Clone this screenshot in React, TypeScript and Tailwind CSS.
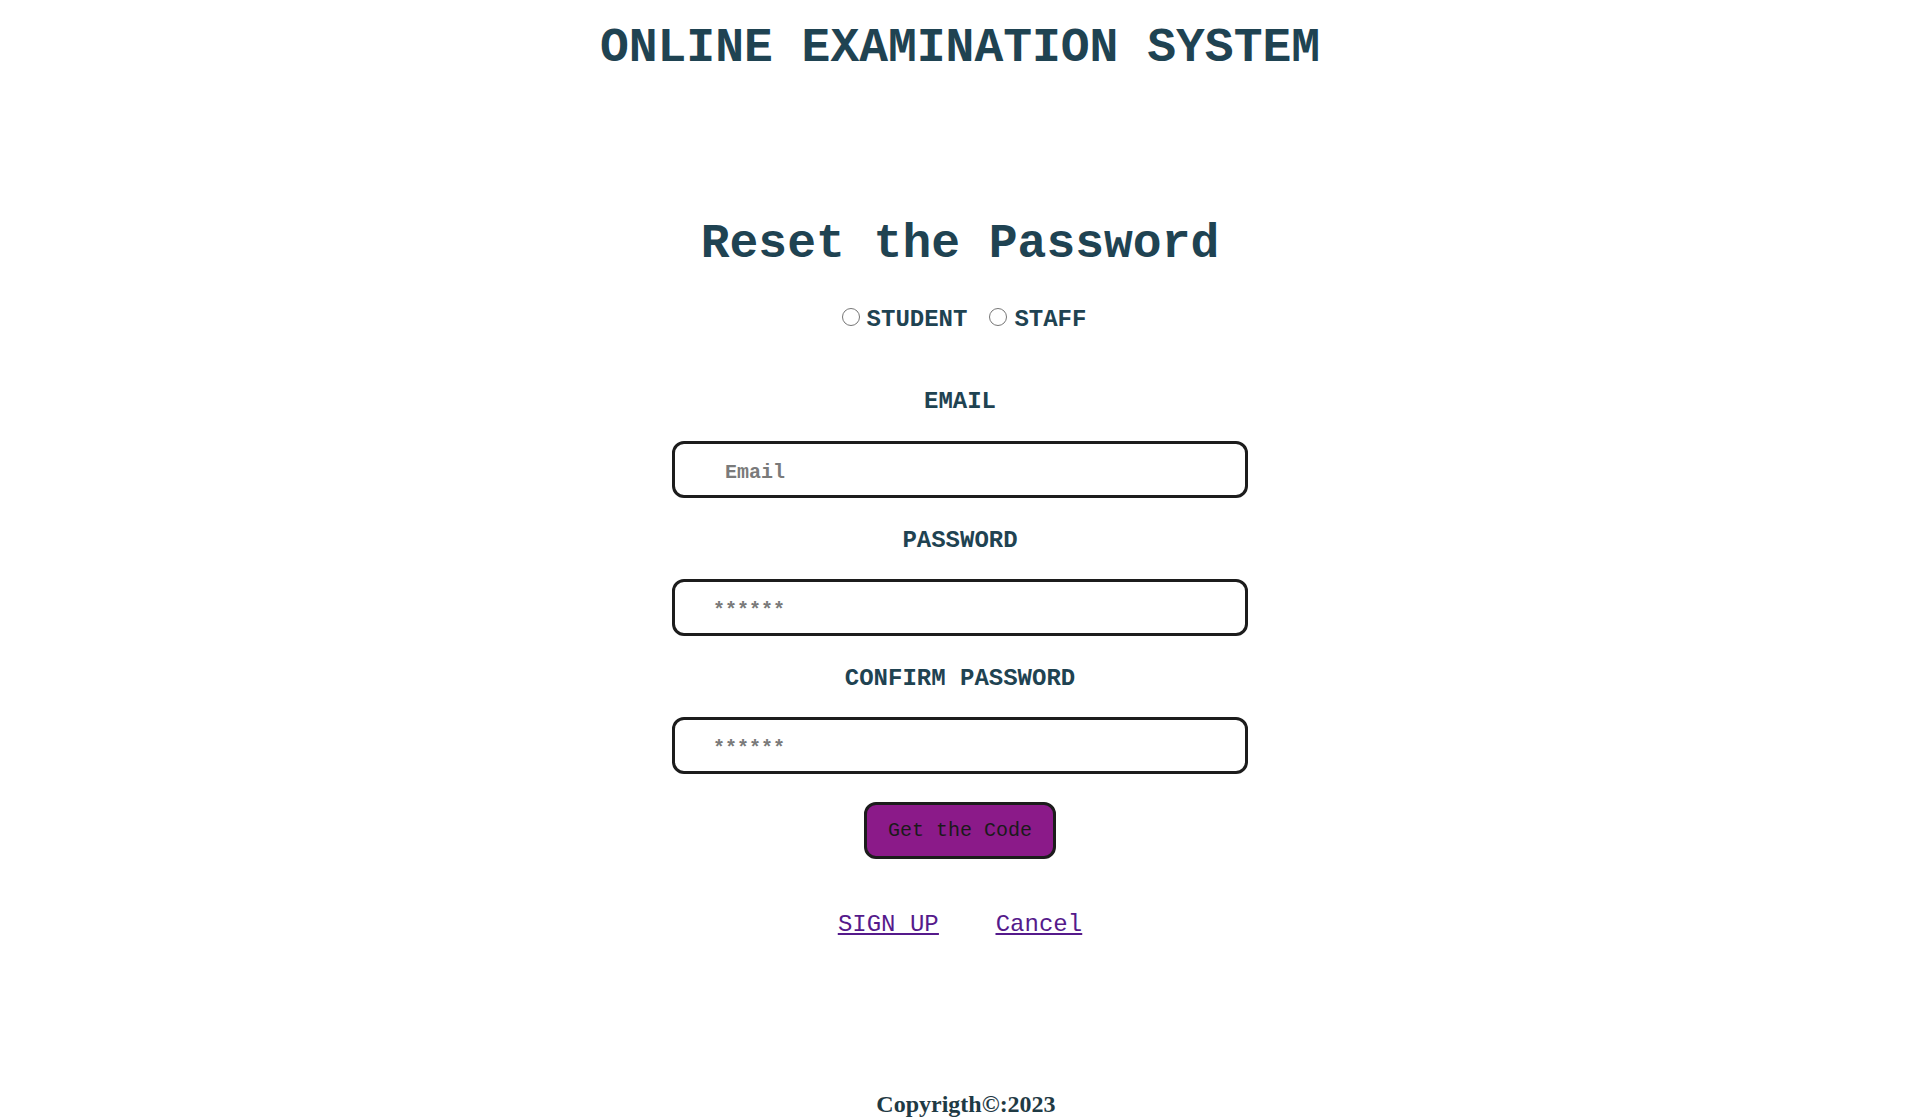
const labelCls = "text-[24px] leading-[28px] font-bold text-[#1f4352]";
const inputCls =
  "w-[576px] h-[57px] pt-[6px] border-[3px] border-[#1c1c1c] rounded-[12px] text-[20px] font-bold text-[#333] placeholder:text-[#7a7a7a] outline-none";

export default function App() {
  return (
    <div className="min-h-[1118px] bg-white flex flex-col items-center font-['Liberation_Mono',monospace]">
      <h1 className="mt-[20px] text-[48px] leading-[56px] font-bold text-[#1f4352]">ONLINE EXAMINATION SYSTEM</h1>

      <h2 className="mt-[140px] text-[48px] leading-[56px] font-bold text-[#1f4352]">Reset the Password</h2>

      <div className={"mt-[34px] ml-[8px] flex items-center " + labelCls}>
        <label className="flex items-center">
          <input type="radio" name="role" className="w-[18px] h-[18px] mr-[7px] -mt-[6px] accent-gray-500" />
          STUDENT
        </label>
        <label className="flex items-center ml-[22px]">
          <input type="radio" name="role" className="w-[18px] h-[18px] mr-[7px] -mt-[6px] accent-gray-500" />
          STAFF
        </label>
      </div>

      <div className={"mt-[54px] " + labelCls}>EMAIL</div>
      <input type="text" placeholder="Email" className={"mt-[25px] pl-[50px] " + inputCls} />

      <div className={"mt-[29px] " + labelCls}>PASSWORD</div>
      <input type="password" placeholder="******" className={"mt-[24px] pl-[38px] " + inputCls} />

      <div className={"mt-[29px] " + labelCls}>CONFIRM PASSWORD</div>
      <input type="password" placeholder="******" className={"mt-[24px] pl-[38px] " + inputCls} />

      <button className="mt-[28px] w-[192px] h-[57px] bg-[#8b1a89] border-[3px] border-[#1c1c1c] rounded-[12px] text-[20px] text-[#1a1a1a] font-['Liberation_Mono',monospace]">
        Get the Code
      </button>

      <div className="mt-[52px] flex gap-[57px] text-[24px] leading-[28px] text-[#551a8b] underline">
        <a href="#">SIGN UP</a>
        <a href="#">Cancel</a>
      </div>

      <footer className="mt-[151px] ml-[12px] text-[24px] leading-[28px] font-bold text-[#1f3a44] font-['Liberation_Serif',serif]">
        Copyrigth©:2023
      </footer>
    </div>
  );
}
